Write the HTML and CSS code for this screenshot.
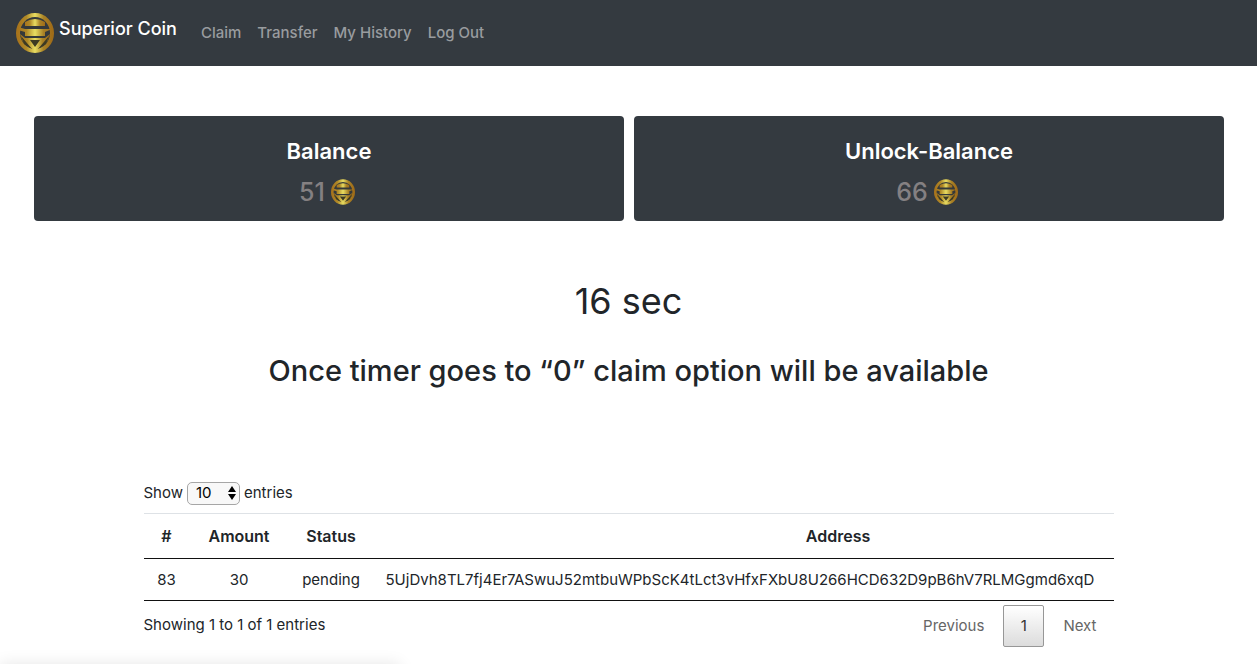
FILE: index.html
```html
<!DOCTYPE html>
<html lang="en">
<head>
  <meta charset="UTF-8">
  <title>Superior Coin</title>
  <meta name="viewport" content="width=device-width, initial-scale=1.0">
  <link rel="stylesheet" href="styles.css">
</head>
<body>

<!-- coin logo, reused in the navbar and the balance cards -->
<svg class="sprite" aria-hidden="true">
  <defs>
    <linearGradient id="gold" x1="0" x2="1" y1="0" y2="0">
      <stop offset="0" stop-color="#a8741c"/>
      <stop offset="0.25" stop-color="#b08a28"/>
      <stop offset="0.5" stop-color="#e8dd62"/>
      <stop offset="0.75" stop-color="#a98226"/>
      <stop offset="1" stop-color="#a06c18"/>
    </linearGradient>
    <symbol id="coin" viewBox="0 0 38 40">
      <ellipse cx="19" cy="20" rx="17" ry="18" fill="#35393a" stroke="url(#gold)" stroke-width="4"/>
      <path d="M9 9Q19 3 29 9V13H9Z" fill="url(#gold)"/>
      <path d="M2 14L9 16H36L29 19V23H9V19L2 17Z" fill="url(#gold)"/>
      <path d="M4 21L9 25H29L34 21L31 29L19 38L7 29Z" fill="url(#gold)"/>
      <path d="M5 23L16 36L8 31Z M33 23L22 36L30 31Z M14 27H24L19 34Z" fill="#3d3a22"/>
    </symbol>
  </defs>
</svg>

<nav class="navbar">
  <a class="brand" href="#">
    <svg class="brand-logo" aria-hidden="true"><use href="#coin"/></svg>
    <span>Superior Coin</span>
  </a>
  <div class="nav-links">
    <a href="#">Claim</a>
    <a href="#">Transfer</a>
    <a href="#">My History</a>
    <a href="#">Log Out</a>
  </div>
</nav>

<section class="cards">
  <div class="card">
    <h2>Balance</h2>
    <p>51 <svg class="coin-icon" aria-hidden="true"><use href="#coin"/></svg></p>
  </div>
  <div class="card">
    <h2>Unlock-Balance</h2>
    <p>66 <svg class="coin-icon" aria-hidden="true"><use href="#coin"/></svg></p>
  </div>
</section>

<section class="timer">
  <h1>16 sec</h1>
  <h2>Once timer goes to “0” claim option will be available</h2>
</section>

<section class="history">
  <div class="length">
    <label for="entries">Show</label>
    <span class="select-box">
      <select id="entries">
        <option>10</option>
        <option>25</option>
        <option>50</option>
        <option>100</option>
      </select>
      <svg class="arrows" viewBox="0 0 8 14" aria-hidden="true"><path d="M4 0L8 6H0Z M0 8H8L4 14Z"/></svg>
    </span>
    <span>entries</span>
  </div>

  <div class="table-wrap">
    <table>
      <thead>
        <tr>
          <th class="col-id">#</th>
          <th class="col-amount">Amount</th>
          <th class="col-status">Status</th>
          <th class="col-address">Address</th>
        </tr>
      </thead>
      <tbody>
        <tr>
          <td>83</td>
          <td>30</td>
          <td>pending</td>
          <td class="address">5UjDvh8TL7fj4Er7ASwuJ52mtbuWPbScK4tLct3vHfxFXbU8U266HCD632D9pB6hV7RLMGgmd6xqD</td>
        </tr>
      </tbody>
    </table>
  </div>

  <div class="table-footer">
    <div>Showing 1 to 1 of 1 entries</div>
    <div class="pagination">
      <button type="button">Previous</button>
      <button type="button" class="current">1</button>
      <button type="button">Next</button>
    </div>
  </div>
</section>

<div class="status-shadow"></div>

</body>
</html>
```
FILE: styles.css
```css
* {
  margin: 0;
  padding: 0;
  box-sizing: border-box;
}

body {
  font-family: Inter, 'Liberation Sans', sans-serif;
  font-size: 15px;
  line-height: 24px;
  color: #212529;
  background: #fff;
}

button, select {
  font: inherit;
}

.sprite {
  position: absolute;
  width: 0;
  height: 0;
}

.navbar {
  display: flex;
  align-items: center;
  gap: 24px;
  padding: 8px 16px;
  min-height: 66px;
  background: #343a40;
}

.brand {
  display: flex;
  gap: 5px;
  color: #fff;
  font-size: 18px;
  font-weight: 500;
  line-height: 32px;
  text-decoration: none;
}

.brand-logo {
  width: 38px;
  height: 40px;
}

.nav-links {
  display: flex;
  gap: 16px;
}

.nav-links a {
  color: #999c9f;
  font-weight: 500;
  text-decoration: none;
}

.nav-links a:hover {
  color: #fff;
}

.cards {
  display: flex;
  gap: 10px;
  padding: 50px 33px 0 34px;
}

.card {
  flex: 1;
  padding: 20px 20px 15px;
  border-radius: 4px;
  background: #343a40;
  text-align: center;
}

.card h2 {
  margin-bottom: 12px;
  color: #fff;
  font-size: 22px;
  font-weight: 600;
  line-height: 30px;
}

.card p {
  display: flex;
  justify-content: center;
  align-items: center;
  gap: 6px;
  padding-right: 4px;
  color: #848082;
  font-size: 25px;
  font-weight: 500;
  line-height: 28px;
}

.coin-icon {
  width: 24px;
  height: 26px;
}

.timer {
  padding: 56px 16px 88px;
  text-align: center;
}

.timer h1 {
  margin-bottom: 24px;
  font-size: 36px;
  font-weight: 400;
  line-height: 48px;
}

.timer h2 {
  font-size: 29px;
  font-weight: 500;
  line-height: 44px;
}

.history {
  width: 90%;
  max-width: 970px;
  margin: 0 auto;
}

.length {
  display: flex;
  align-items: center;
  gap: 4px;
  margin-bottom: 8px;
}

.select-box {
  position: relative;
  display: flex;
}

.select-box select {
  width: 53px;
  height: 23px;
  padding: 0 8px;
  appearance: none;
  border: 1px solid #a6a6a6;
  border-radius: 5px;
  background: #f8f8f8;
  color: #000;
  line-height: 20px;
}

.arrows {
  position: absolute;
  top: 4px;
  right: 4px;
  width: 8px;
  height: 14px;
  pointer-events: none;
}

.table-wrap {
  overflow-x: auto;
  scrollbar-width: none;
}

table {
  border-collapse: separate;
  border-spacing: 0;
  border-bottom: 1px solid #111;
  table-layout: fixed;
  width: 1159px;
}

th {
  padding: 10px 0;
  border-top: 1px solid #dee2e6;
  border-bottom: 1px solid #111;
  font-size: 16px;
  font-weight: 600;
  text-align: center;
}

td {
  padding: 9px 0 8px;
  text-align: center;
}

.col-id {
  width: 46px;
}

.col-amount {
  width: 99px;
}

.col-status {
  width: 85px;
}

td.address {
  padding-left: 12px;
  text-align: left;
}

.table-footer {
  display: flex;
  justify-content: space-between;
  padding: 4px 0 16px;
}

.table-footer > div:first-child {
  padding-top: 8px;
}

.pagination {
  display: flex;
  gap: 2px;
}

.pagination button {
  height: 42px;
  padding: 0 16px;
  border: 1px solid transparent;
  border-radius: 2px;
  background: none;
  color: #666;
}

.pagination .current {
  min-width: 41px;
  padding: 0;
  border-color: #979797;
  background: linear-gradient(to bottom, #fff, #dcdcdc);
  color: #333;
}

/* soft shadow in the bottom left corner */
.status-shadow {
  position: fixed;
  top: 100%;
  left: 0;
  width: 400px;
  height: 20px;
  box-shadow: 0 0 16px rgba(0, 0, 0, 0.1);
}
```
